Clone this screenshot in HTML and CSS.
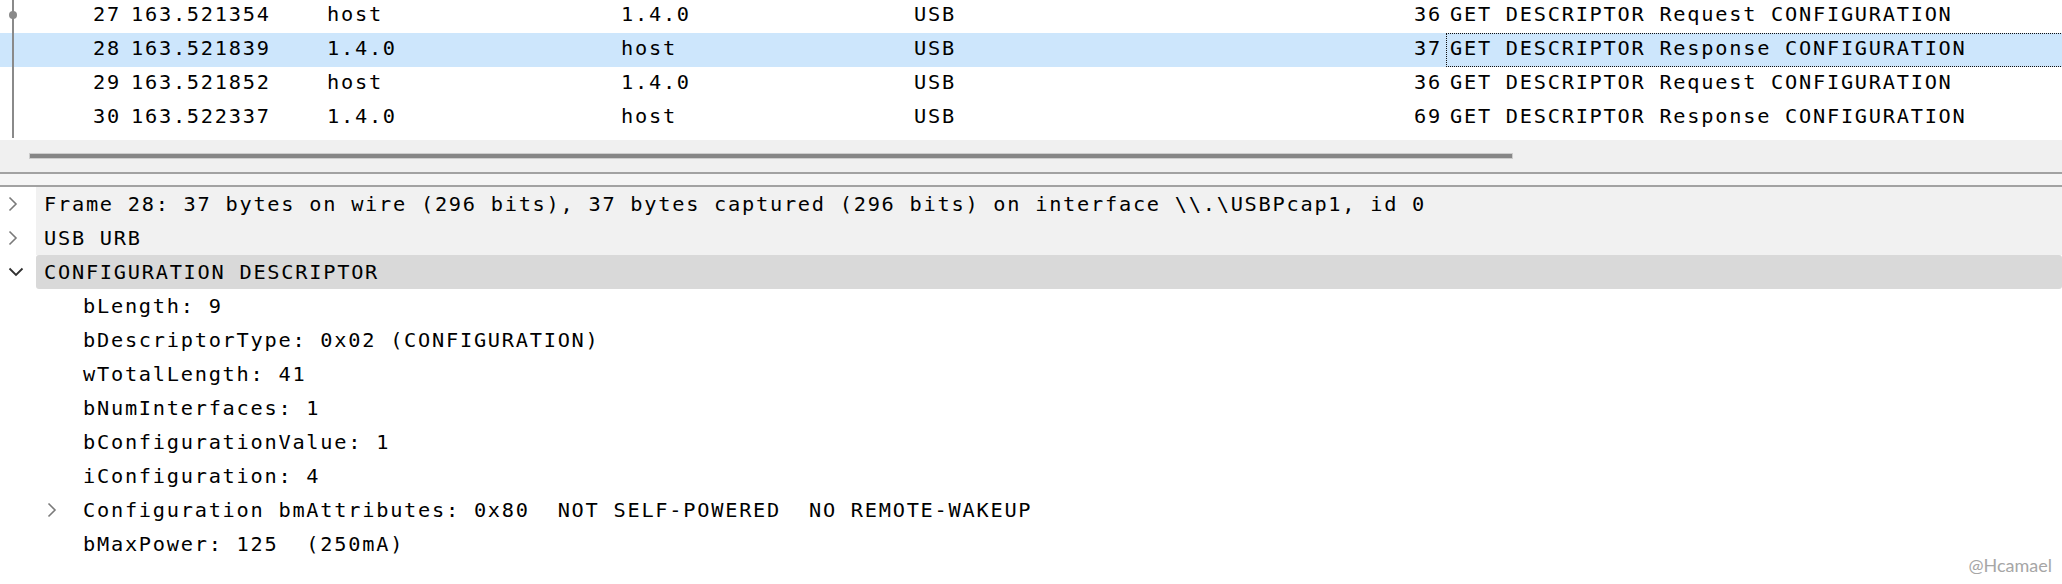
FILE: index.html
```html
<!DOCTYPE html>
<html>
<head>
<meta charset="utf-8">
<link rel="stylesheet" href="styles.css">
</head>
<body>
<div class="packets">
  <div class="plist">
    <div class="prow"><span class="c-no">27</span><span class="c-time">163.521354</span><span class="c-src">host</span><span class="c-dst">1.4.0</span><span class="c-proto">USB</span><span class="c-len">36</span><span class="c-info">GET DESCRIPTOR Request CONFIGURATION</span></div>
    <div class="prow sel"><span class="c-no">28</span><span class="c-time">163.521839</span><span class="c-src">1.4.0</span><span class="c-dst">host</span><span class="c-proto">USB</span><span class="c-len">37</span><span class="c-info">GET DESCRIPTOR Response CONFIGURATION</span></div>
    <div class="prow"><span class="c-no">29</span><span class="c-time">163.521852</span><span class="c-src">host</span><span class="c-dst">1.4.0</span><span class="c-proto">USB</span><span class="c-len">36</span><span class="c-info">GET DESCRIPTOR Request CONFIGURATION</span></div>
    <div class="prow"><span class="c-no">30</span><span class="c-time">163.522337</span><span class="c-src">1.4.0</span><span class="c-dst">host</span><span class="c-proto">USB</span><span class="c-len">69</span><span class="c-info">GET DESCRIPTOR Response CONFIGURATION</span></div>
  </div>
  <div class="related-line"></div>
  <div class="related-dot"></div>
</div>
<div class="hscroll"><div class="thumb"></div></div>
<div class="splitter"></div>
<div class="details">
  <div class="drow l0 shade"><span class="twisty"><svg width="10" height="16" viewBox="0 0 10 16"><polyline points="1.5,1.5 8,8 1.5,14.5" fill="none" stroke="#7a7a7a" stroke-width="1.6"/></svg></span><span class="label">Frame 28: 37 bytes on wire (296 bits), 37 bytes captured (296 bits) on interface \\.\USBPcap1, id 0</span></div>
  <div class="drow l0 shade"><span class="twisty"><svg width="10" height="16" viewBox="0 0 10 16"><polyline points="1.5,1.5 8,8 1.5,14.5" fill="none" stroke="#7a7a7a" stroke-width="1.6"/></svg></span><span class="label">USB URB</span></div>
  <div class="drow l0 current"><span class="twisty"><svg width="16" height="10" viewBox="0 0 16 10"><polyline points="1.5,1.5 8,8 14.5,1.5" fill="none" stroke="#303030" stroke-width="1.8"/></svg></span><span class="label">CONFIGURATION DESCRIPTOR</span></div>
  <div class="drow l1"><span class="twisty"></span><span class="label">bLength: 9</span></div>
  <div class="drow l1"><span class="twisty"></span><span class="label">bDescriptorType: 0x02 (CONFIGURATION)</span></div>
  <div class="drow l1"><span class="twisty"></span><span class="label">wTotalLength: 41</span></div>
  <div class="drow l1"><span class="twisty"></span><span class="label">bNumInterfaces: 1</span></div>
  <div class="drow l1"><span class="twisty"></span><span class="label">bConfigurationValue: 1</span></div>
  <div class="drow l1"><span class="twisty"></span><span class="label">iConfiguration: 4</span></div>
  <div class="drow l1"><span class="twisty"><svg width="10" height="16" viewBox="0 0 10 16"><polyline points="1.5,1.5 8,8 1.5,14.5" fill="none" stroke="#7a7a7a" stroke-width="1.6"/></svg></span><span class="label">Configuration bmAttributes: 0x80  NOT SELF-POWERED  NO REMOTE-WAKEUP</span></div>
  <div class="drow l1"><span class="twisty"></span><span class="label">bMaxPower: 125  (250mA)</span></div>
  <div class="watermark">@Hcamael</div>
</div>
</body>
</html>
```
FILE: styles.css
```css
html, body {
  margin: 0;
  padding: 0;
  background: #ffffff;
  overflow: hidden;
}
body {
  width: 2062px;
  height: 584px;
  font-family: "DejaVu Sans Mono", "Liberation Mono", monospace;
  font-size: 20.3px;
  letter-spacing: 1.75px;
  color: #000;
}
.packets {
  position: relative;
  height: 140px;
  background: #fff;
  overflow: hidden;
}
.plist {
  margin-top: -1px;
}
.prow {
  display: grid;
  grid-template-columns: 121px 206px 294px 293px 386px 146px 1fr;
  height: 34px;
  line-height: 30px;
  white-space: pre;
}
.prow.sel {
  background: #cde6fc;
}
.c-no { text-align: right; }
.c-time { padding-left: 10px; }
.c-len { text-align: right; padding-right: 4px; }
.c-info {
  border: 1px dotted transparent;
  padding-left: 3px;
  margin-right: -3px;
  line-height: 28px;
  padding-bottom: 2px;
}
.prow.sel .c-info {
  border-color: #111;
}
.related-line {
  position: absolute;
  left: 12px;
  top: 0;
  width: 2px;
  height: 138px;
  background: #8a8a8a;
}
.related-dot {
  position: absolute;
  left: 9px;
  top: 11px;
  width: 8px;
  height: 8px;
  border-radius: 50%;
  background: #8a8a8a;
}
.hscroll {
  height: 32px;
  background: #f0f0f0;
  padding-top: 14px;
  box-sizing: border-box;
}
.thumb {
  margin-left: 30px;
  width: 1482px;
  height: 4px;
  background: #868686;
  box-shadow: 0 0 0 1px #cdcdcd;
}
.splitter {
  height: 11px;
  background: #f5f5f5;
  border-top: 2px solid #a2a2a2;
  border-bottom: 2px solid #a2a2a2;
}
.details {
  position: relative;
  height: 397px;
  background: #fff;
}
.drow {
  display: flex;
  height: 34px;
  line-height: 34px;
  white-space: pre;
}
.drow.l1 {
  padding-left: 39px;
}
.twisty {
  flex: 0 0 36px;
  display: flex;
  align-items: center;
  padding-left: 8px;
  box-sizing: border-box;
}
.label {
  flex: 1;
  padding-left: 8px;
}
.drow.shade .label {
  background: #f1f1f1;
}
.drow.current .label {
  background: #d9d9d9;
  border-radius: 3px;
}
.watermark {
  position: absolute;
  right: 10px;
  bottom: 8px;
  font-family: "Lato", "Open Sans", sans-serif;
  font-size: 18px;
  letter-spacing: 0;
  color: #a6a6a6;
}
```
